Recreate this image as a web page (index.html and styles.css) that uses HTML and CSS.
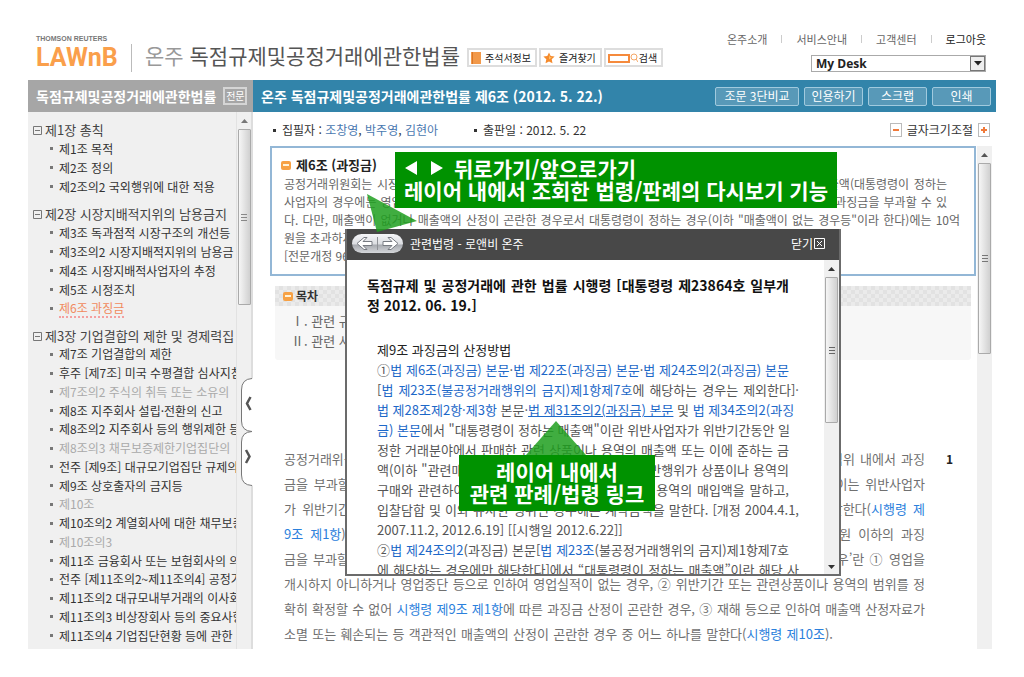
FILE: index.html
```html
<!DOCTYPE html>
<html lang="ko">
<head>
<meta charset="utf-8">
<title>온주 독점규제및공정거래에관한법률</title>
<link rel="stylesheet" href="styles.css">
</head>
<body>
<div class="page">
  <header class="top">
    <div class="logo"><span class="logo-sub">THOMSON REUTERS</span><span class="logo-main">LAWnB</span></div>
    <h1 class="title"><span class="title-brand">온주</span> 독점규제및공정거래에관한법률</h1>
    <div class="tools">
      <button class="tool"><svg width="10" height="12" viewBox="0 0 10 12"><rect width="10" height="12" fill="#f2994a"/><path d="M1.500 0v12" stroke="#d9772a"/></svg>주석서정보</button>
      <button class="tool"><svg width="12" height="12" viewBox="0 0 12 12"><path d="M6 .5l1.700 3.600 3.900.5-2.900 2.700.8 4L6 9.400l-3.500 1.900.8-4L.4 4.600l3.900-.5z" fill="#f58a2c"/><path d="M6 3l1 2 2 .5-3 2z" fill="#ffc065"/></svg>즐겨찾기</button>
      <button class="tool tool-search"><svg width="30" height="12" viewBox="0 0 30 12" fill="none"><rect x="1" y="3" width="20" height="7" stroke="#f58a3c" stroke-width="2"/><circle cx="26" cy="5" r="3" stroke="#f5a767"/><path d="M28 7l2 3" stroke="#f5a767"/></svg>검색</button>
    </div>
    <div class="account">
      <nav class="links"><a href="#">온주소개</a><i></i><a href="#">서비스안내</a><i></i><a href="#">고객센터</a><i></i><a href="#" class="dark">로그아웃</a></nav>
      <div class="desk"><select aria-label="My Desk"><option>My Desk</option></select><span class="desk-arrow"><svg width="8" height="5"><path d="M0 0h8L4 4.500z" fill="#222"/></svg></span></div>
    </div>
  </header>

  <div class="columns">
    <aside class="side">
      <div class="side-head"><h2>독점규제및공정거래에관한법률</h2><button>전문</button></div>
      <div class="side-body">
        <nav class="tree">
          <h3><svg width="9" height="9"><path d="M.5.5h8v8h-8zM2 4.500h5" fill="none" stroke="#777"/></svg>제1장 총칙</h3>
          <ul>
            <li><a href="#">제1조 목적</a></li><li><a href="#">제2조 정의</a></li><li><a href="#">제2조의2 국외행위에 대한 적용</a></li>
          </ul>
          <h3><svg width="9" height="9"><path d="M.5.5h8v8h-8zM2 4.500h5" fill="none" stroke="#777"/></svg>제2장 시장지배적지위의 남용금지</h3>
          <ul>
            <li><a href="#">제3조 독과점적 시장구조의 개선등</a></li><li><a href="#">제3조의2 시장지배적지위의 남용금</a></li><li><a href="#">제4조 시장지배적사업자의 추정</a></li><li><a href="#">제5조 시정조치</a></li><li><a href="#" class="current">제6조 과징금</a></li>
          </ul>
          <h3><svg width="9" height="9"><path d="M.5.5h8v8h-8zM2 4.500h5" fill="none" stroke="#777"/></svg>제3장 기업결합의 제한 및 경제력집</h3>
          <ul class="long">
            <li><a href="#">제7조 기업결합의 제한</a></li>
            <li><a href="#">후주 [제7조] 미국 수평결합 심사지침</a></li>
            <li class="off"><a href="#">제7조의2 주식의 취득 또는 소유의</a></li>
            <li><a href="#">제8조 지주회사 설립·전환의 신고</a></li>
            <li><a href="#">제8조의2 지주회사 등의 행위제한 등</a></li>
            <li class="off"><a href="#">제8조의3 채무보증제한기업집단의</a></li>
            <li><a href="#">전주 [제9조] 대규모기업집단 규제의</a></li>
            <li><a href="#">제9조 상호출자의 금지등</a></li>
            <li class="off"><a href="#">제10조</a></li>
            <li><a href="#">제10조의2 계열회사에 대한 채무보증</a></li>
            <li class="off"><a href="#">제10조의3</a></li>
            <li><a href="#">제11조 금융회사 또는 보험회사의 의</a></li>
            <li><a href="#">전주 [제11조의2~제11조의4] 공정거</a></li>
            <li><a href="#">제11조의2 대규모내부거래의 이사회</a></li>
            <li><a href="#">제11조의3 비상장회사 등의 중요사항</a></li>
            <li><a href="#">제11조의4 기업집단현황 등에 관한</a></li>
          </ul>
        </nav>
        <div class="scroll scroll-side"><svg class="up" width="7" height="4"><path d="M0 4h7L3.500 0z" fill="#777"/></svg><div class="thumb"><svg width="6" height="7"><path d="M0 .5h6M0 3.500h6M0 6.500h6" stroke="#888"/></svg></div></div>
        <svg class="handle" width="12" height="108" viewBox="0 0 12 108"><path d="M12 .5H9Q.5 2 .5 10V44Q.5 52 9 53.500Q.5 55 .5 63V98Q.5 106 9 107.500H12" fill="#fff"/><path d="M11 .5Q.5 1 .5 12V43Q.5 53 11 53.500Q.5 54 .5 64V97Q.5 107 11 107.500" fill="none" stroke="#777"/><path d="M9.500 19L6 25.500l3.500 6.500M5 72l3.500 6.500L5 85" fill="none" stroke="#555" stroke-width="2.500"/></svg>
      </div>
    </aside>

    <main class="main">
      <div class="bar">
        <h2>온주 독점규제및공정거래에관한법률 제6조 (2012. 5. 22.)</h2>
        <div class="bar-buttons"><button class="wide">조문 3단비교</button><button>인용하기</button><button>스크랩</button><button>인쇄</button></div>
      </div>
      <div class="meta">
        <p><b class="dot"></b>집필자 : <a href="#">조창영</a>, <a href="#">박주영</a>, <a href="#">김현아</a></p>
        <p><b class="dot"></b>출판일 : 2012. 5. 22</p>
        <div class="zoom"><button aria-label="작게"><svg width="10" height="12"><path d="M2 6h6" stroke="#f07a3a" stroke-width="2"/></svg></button><span>글자크기조절</span><button aria-label="크게"><svg width="10" height="12"><path d="M2 6h6M5 3v6" stroke="#f07a3a" stroke-width="2"/></svg></button></div>
      </div>
      <div class="view">
        <div class="content">
          <section class="law">
            <h3><span class="minus"></span>제6조 (과징금)</h3>
            <p class="lines">
              <span class="full inset">공정거래위원회는 시장지배적사업자가 남용행위를 한 경우에는 당해 사업자에 대하여 대통령령이 정하는 매출액(대통령령이 정하는</span>
              <span class="full inset">사업자의 경우에는 영업수익을 말한다. 이하 같다)에 100분의 3을 곱한 금액을 초과하지 아니하는 범위안에서 과징금을 부과할 수 있</span>
              <span class="full">다. 다만, 매출액이 없거나 매출액의 산정이 곤란한 경우로서 대통령령이 정하는 경우(이하 "매출액이 없는 경우등"이라 한다)에는 10억</span>
              <span>원을 초과하지 아니하는 범위안에서 과징금을 부과할 수 있다.</span>
              <span>[전문개정 96.12.30]</span>
            </p>
          </section>
          <section class="toc">
            <h3><span class="minus"></span>목차</h3>
            <ol><li>Ⅰ. 관련 규정</li><li>Ⅱ. 관련 사항</li></ol>
          </section>
          <div class="article">
            <p class="lines">
              <span class="full">공정거래위원회는 시장지배적사업자가 남용행위를 한 경우 사업자에게 매출액에 100분의 3을 곱한 범위 내에서 과징</span>
              <span class="full">금을 부과할 수 있다. 시장지배적지위 남용행위에 대한 과징금의 산정기준이 되는 매출액이라 함은 이는 위반사업자</span>
              <span class="full">가 위반기간 동안 일정한 거래분야에서 판매한 상품이나 용역의 매출액 또는 이에 준하는 금액을 말한다(<a href="#">시행령 제</a></span>
              <span class="full"><a href="#">9조 제1항</a>). 다만, 매출액이 없거나 그 산정이 곤란한 경우로서 대통령령이 정하는 경우에는 10억원 이하의 과징</span>
              <span class="full">금을 부과할 수 있다. 여기서 매출액의 산정이 곤란한 경우로서 대통령령이 정하는 ‘매출액이 없는 경우’란 ① 영업을</span>
              <span class="full">개시하지 아니하거나 영업중단 등으로 인하여 영업실적이 없는 경우, ② 위반기간 또는 관련상품이나 용역의 범위를 정</span>
              <span class="full">확히 확정할 수 없어 <a href="#">시행령 제9조 제1항</a>에 따른 과징금 산정이 곤란한 경우, ③ 재해 등으로 인하여 매출액 산정자료가</span>
              <span class="full last">소멸 또는 훼손되는 등 객관적인 매출액의 산정이 곤란한 경우 중 어느 하나를 말한다(<a href="#">시행령 제10조</a>).</span>
            </p>
            <b class="number">1</b>
          </div>
        </div>
        <div class="scroll scroll-main"><svg class="up" width="7" height="4"><path d="M0 4h7L3.500 0z" fill="#555"/></svg><div class="thumb"><svg width="6" height="7"><path d="M0 .5h6M0 3.500h6M0 6.500h6" stroke="#777"/></svg></div></div>
      </div>

      <section class="popup">
        <div class="popup-head">
          <button class="history" aria-label="뒤로가기/앞으로가기"><svg width="51" height="19" viewBox="0 0 51 19"><defs><linearGradient id="pill" x2="0" y2="1"><stop offset="0" stop-color="#f5f6f8"/><stop offset=".5" stop-color="#dcdee2"/><stop offset=".6" stop-color="#a9acb2"/><stop offset="1" stop-color="#d5d7da"/></linearGradient></defs><rect width="51" height="19" rx="9.500" fill="url(#pill)"/><path d="M25.500 3v13" stroke="#8f9297"/><path d="M5 9.500L12 3.500h3L11 7.500h9v4h-9l4 4h-3zM46 9.500l-7-6h-3l4 4h-9v4h9l-4 4h3z" fill="#fff" stroke="#777b82"/></svg></button>
          <h2>관련법령 - 로앤비 온주</h2>
          <button class="close">닫기<svg width="11" height="11"><path d="M.5.5h10v10H.5zM3 3l5 5M8 3L3 8" fill="none" stroke="#fff"/></svg></button>
        </div>
        <div class="popup-body">
          <div class="popup-text">
            <h3 class="lines"><span class="full">독점규제 및 공정거래에 관한 법률 시행령 [대통령령 제23864호 일부개</span><span>정 2012. 06. 19.]</span></h3>
            <div class="lines decree">
              <h4>제9조 과징금의 산정방법</h4>
              <span class="full inset">①<a href="#">법 제6조(과징금) 본문</a>·<a href="#">법 제22조(과징금) 본문</a>·<a href="#">법 제24조의2(과징금) 본문</a></span>
              <span class="full">[<a href="#">법 제23조(불공정거래행위의 금지)제1항제7호</a>에 해당하는 경우는 제외한다]·</span>
              <span class="full inset"><a href="#">법 제28조제2항·제3항</a> 본문·<a href="#" class="hover">법 제31조의2(과징금) 본문</a> 및 <a href="#">법 제34조의2(과징</a></span>
              <span class="full inset"><a href="#">금) 본문</a>에서 "대통령령이 정하는 매출액"이란 위반사업자가 위반기간동안 일</span>
              <span class="full inset">정한 거래분야에서 판매한 관련 상품이나 용역의 매출액 또는 이에 준하는 금</span>
              <span class="full inset">액(이하 "관련매출액"이라 한다)을 말한다. 다만 위반행위가 상품이나 용역의</span>
              <span class="full inset">구매와 관련하여 이루어진 경우에는 관련 상품이나 용역의 매입액을 말하고,</span>
              <span class="full">입찰담합 및 이와 유사한 행위인 경우에는 계약금액을 말한다. [개정 2004.4.1,</span>
              <span>2007.11.2, 2012.6.19] [[시행일 2012.6.22]]</span>
              <span class="full inset">②<a href="#">법 제24조의2</a>(과징금) 본문[<a href="#">법 제23조</a>(불공정거래행위의 금지)제1항제7호</span>
              <span class="full">에 해당하는 경우에만 해당한다]에서 “대통령령이 정하는 매출액”이란 해당 사</span>
            </div>
          </div>
          <div class="scroll scroll-popup"><svg class="up" width="7" height="4"><path d="M0 4h7L3.500 0z" fill="#333"/></svg><div class="thumb"><svg width="6" height="7"><path d="M0 .5h6M0 3.500h6M0 6.500h6" stroke="#666"/></svg></div><svg class="down" width="7" height="4"><path d="M0 0h7L3.500 4z" fill="#333"/></svg></div>
        </div>
      </section>

      <svg class="pointer pointer-history" width="50" height="40"><path d="M0 0L50 27L10 38z" fill="#1f9f1f" fill-opacity=".85"/></svg>
      <svg class="pointer pointer-link" width="60" height="34"><path d="M30 0L60 34H0z" fill="#1f9f1f" fill-opacity=".85"/></svg>
      <p class="callout callout-history"><span class="arrows"><svg width="40" height="14"><path d="M13 0v14L1 7zM27 0v14l12-7z" fill="#fff"/></svg>뒤로가기/앞으로가기</span><span>레이어 내에서 조회한 법령/판례의 다시보기 기능</span></p>
      <p class="callout callout-link"><span>레이어 내에서</span><span>관련 판례/법령 링크</span></p>
    </main>
  </div>
</div>
</body>
</html>
```
FILE: styles.css
```css
* { box-sizing: border-box; }
body { margin: 0; background: #fff; color: #444; font: 12px/18px "Noto Sans CJK KR", sans-serif; }
h1, h2, h3, h4, p, ul, ol { margin: 0; padding: 0; }
ul, ol { list-style: none; }
a { color: inherit; text-decoration: none; }
button { margin: 0; padding: 0; border: 0; background: none; color: inherit; font: inherit; }
svg { flex: none; }
.page { padding: 28px; }

.top { display: flex; height: 52px; padding-left: 8px; white-space: nowrap; }
.logo { display: flex; flex-direction: column; width: 96px; margin: 7px 13px 0 0; font-family: Roboto, sans-serif; }
.logo-sub { font: bold 7px/8px "Liberation Sans", sans-serif; color: #777; }
.logo-main { margin-top: 1px; border-right: 1px solid #bbb; font-weight: bold; font-size: 25px; line-height: 28px; color: #fa9f4b; }
.title { font-size: 21px; line-height: 30px; font-weight: normal; color: #555; margin-top: 12px; }
.title-brand { color: #999; }
.tools { display: flex; gap: 2px; margin: 20px 0 0 7px; }
.tool { display: flex; align-items: center; gap: 4px; height: 19px; padding: 0 4px 0 2px; border: 2px solid #ddd; background: #fff; color: #222; font-size: 10px; line-height: 14px; }
.tool-search { gap: 1px; }
.account { margin-left: auto; padding-right: 10px; }
.links { display: flex; align-items: center; justify-content: flex-end; gap: 14px; font-size: 11px; line-height: 22px; color: #666; }
.links i { width: 1px; height: 8px; background: #ccc; }
.links .dark { color: #222; }
.desk { position: relative; width: 175px; margin: 5px 0 0 auto; display: flex; }
.desk select { appearance: none; width: 100%; height: 17px; padding: 0 4px; border: 1px solid #aaa; border-radius: 0; background: #fff; color: #222; font: bold 12px/14px "Open Sans", sans-serif; }
.desk-arrow { position: absolute; right: 1px; top: 1px; width: 15px; height: 15px; border: 1px solid #777; background: #eee; display: flex; align-items: center; justify-content: center; pointer-events: none; }

.columns { display: flex; height: 569px; }
.side { width: 225px; flex: none; display: flex; flex-direction: column; }
.side-head { display: flex; align-items: center; gap: 7px; height: 32px; padding: 0 5px 0 8px; background: #a6a6a6; color: #fff; white-space: nowrap; }
.side-head h2, .bar h2 { font-size: 14px; line-height: 20px; }
.side-head button { width: 24px; height: 18px; border: 2px solid #d5d5d5; font-size: 10px; line-height: 14px; }
.side-body { position: relative; display: flex; flex: 1; min-height: 0; background: #f0f0f0; }
.tree { flex: 1; min-width: 0; overflow: hidden; padding: 9px 0 0 5px; white-space: nowrap; }
.tree h3 { display: flex; align-items: center; gap: 3px; font-size: 13px; font-weight: normal; line-height: 18px; }
.tree ul { margin-bottom: 9px; }
.tree li { display: flex; align-items: center; gap: 6px; height: 19px; padding-left: 17px; color: #333; }
.tree li::before { content: ""; width: 3px; height: 3px; background: #777; flex: none; }
.tree .long { display: grid; grid-auto-rows: 1fr; height: 300px; margin: 0; }
.tree .long li { height: auto; }
.tree .off { color: #aaa; }
.tree .current { color: #f08a5d; border-bottom: 2px dotted #f4a0a0; line-height: 16px; }

.scroll { display: flex; flex-direction: column; align-items: center; flex: none; width: 15px; margin-left: 1px; background: #f0f0f0; }
.scroll .up { margin: 7px 0 6px; }
.scroll .down { margin: auto 0 5px; }
.thumb { display: flex; align-items: center; justify-content: center; width: 13px; border: 1px solid #aaa; border-radius: 1px; background: linear-gradient(90deg, #f6f6f6, #d0d0d0); }
.scroll-side { width: 17px; margin-left: 0; border-left: 1px solid #e2e2e2; border-right: 2px solid #ddd; }
.scroll-side .thumb { height: 176px; }
.scroll-main .thumb { height: 191px; }
.scroll-popup .thumb { height: 146px; }
.handle { position: absolute; right: 0; top: 266px; }

.main { position: relative; flex: 1; min-width: 0; display: flex; flex-direction: column; }
.bar { display: flex; align-items: center; justify-content: space-between; height: 32px; padding: 0 5px 0 8px; background: #3284aa; color: #fff; white-space: nowrap; }
.bar-buttons { display: flex; gap: 5px; }
.bar-buttons button { width: 59px; height: 19px; border: 1px solid #a0cade; border-radius: 2px; background: #5899b8; line-height: 16px; }
.bar-buttons .wide { width: 84px; }
.meta { display: flex; align-items: center; gap: 36px; height: 34px; padding: 2px 6px 0 20px; color: #333; white-space: nowrap; }
.meta p { display: flex; align-items: center; white-space: pre; }
.meta a { color: #4a78b0; }
.dot { width: 3px; height: 3px; margin-right: 6px; background: #333; }
.zoom { display: flex; align-items: center; gap: 5px; margin-left: auto; }
.zoom button { display: flex; width: 12px; height: 14px; border: 1px solid #bbb; align-items: center; justify-content: center; }
.view { display: flex; flex: 1; min-height: 0; padding: 0 4px 0 17px; }
.content { flex: 1; min-width: 0; }

.lines span { display: block; white-space: nowrap; }
.lines .full { text-align-last: justify; }
.law { height: 130px; padding: 7px 14px 0 12px; border: 2px solid #93b7d6; }
.law h3 { display: flex; align-items: center; gap: 5px; margin-left: -3px; font-size: 13px; line-height: 20px; color: #222; }
.minus { display: flex; align-items: center; justify-content: center; width: 10px; height: 9px; border-radius: 2px; background: #f7a144; }
.minus::before { content: ""; width: 6px; height: 2px; background: #fff3da; }
.law .lines { line-height: 18px; color: #666; }
.law .inset { padding-right: 13px; }
.toc { margin: 10px 5px 0; background: #f7f7f7; border-radius: 3px; padding-bottom: 9px; }
.toc h3 { display: flex; align-items: center; gap: 3px; height: 20px; padding-left: 8px; font-size: 12px; color: #333; background: repeating-conic-gradient(#e2e2e2 0 25%, #ebebeb 0 50%) 0 0 / 8px 8px; }
.toc ol { padding: 5px 0 0 16px; font-size: 13px; line-height: 20px; color: #666; }
.article { display: flex; margin-top: 86px; padding: 0 23px 0 14px; font-size: 13px; line-height: 25px; color: #707070; }
.article .lines { flex: 1; min-width: 0; }
.article a { color: #2b80dc; }
.article .last { padding-right: 92px; }
.number { width: 28px; text-align: right; font-size: 12px; color: #222; }

.popup { position: absolute; left: 92px; top: 149px; width: 496px; height: 347px; display: flex; flex-direction: column; border: 2px solid #6b6b6b; border-top: 0; background: #fff; color: #555; }
.popup-head { display: flex; align-items: center; height: 31px; padding: 0 14px 2px 5px; background: #484848; color: #fff; }
.popup-head h2 { margin-left: 7px; font-size: 12px; font-weight: normal; }
.history { display: flex; }
.close { display: flex; align-items: center; gap: 1px; margin-left: auto; }
.popup-body { display: flex; flex: 1; min-height: 0; }
.popup-text { flex: 1; min-width: 0; overflow: hidden; padding: 15px 24px 0 20px; font-size: 13px; line-height: 20px; }
.popup-text h3 { padding-right: 10px; font-size: 14px; line-height: 20px; color: #111; }
.decree { margin: 25px 0 0 10px; }
.decree h4 { font-size: 13px; font-weight: normal; color: #222; }
.decree .inset { padding-right: 10px; }
.decree a { color: #1d68c8; }
.decree .hover { text-decoration: underline; }

.pointer { position: absolute; }
.pointer-history { left: 114px; top: 114px; }
.pointer-link { left: 273px; top: 341px; }
.callout { position: absolute; height: 56px; padding: 5px 0; background: #009200; color: #fff; font-size: 21px; font-weight: bold; line-height: 22px; white-space: nowrap; }
.callout span { display: block; }
.callout .arrows { display: flex; align-items: center; gap: 10px; }
.callout-history { left: 142px; top: 72px; width: 442px; padding-left: 9px; }
.callout-link { left: 206px; top: 375px; width: 196px; text-align: center; }
```
